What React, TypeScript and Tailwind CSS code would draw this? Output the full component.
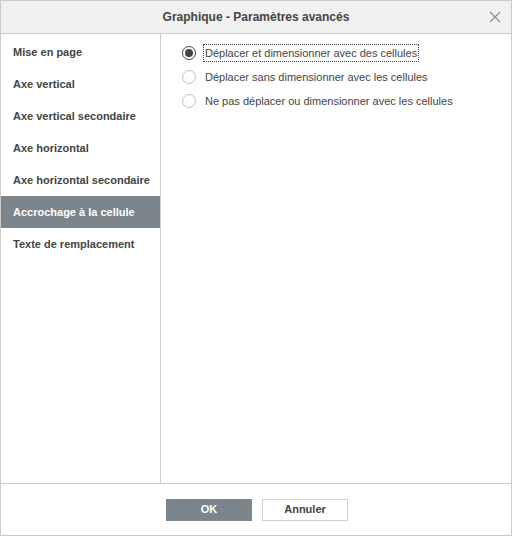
import React, { useState } from 'react';

const menu = [
  'Mise en page',
  'Axe vertical',
  'Axe vertical secondaire',
  'Axe horizontal',
  'Axe horizontal secondaire',
  'Accrochage à la cellule',
  'Texte de remplacement',
];

const options = [
  'Déplacer et dimensionner avec des cellules',
  'Déplacer sans dimensionner avec les cellules',
  'Ne pas déplacer ou dimensionner avec les cellules',
];

export default function App() {
  const [active] = useState(5);
  const [choice, setChoice] = useState(0);

  return (
    <div
      className="w-[512px] h-[536px] flex flex-col bg-white border border-[#cbcbcb] text-[#444] text-[11px]"
      style={{ fontFamily: 'Arial, "Liberation Sans", sans-serif' }}
    >
      <div className="h-[33px] shrink-0 flex items-center justify-center relative bg-[#f1f1f1] border-b border-[#cbcbcb]">
        <span className="text-[12px] font-bold text-[#444]">Graphique - Paramètres avancés</span>
        <svg className="absolute right-[10px] top-[10px]" width="12" height="12" viewBox="0 0 12 12">
          <path d="M1 1L11 11M11 1L1 11" stroke="#8a8a8a" strokeWidth="1.1" fill="none" />
        </svg>
      </div>

      <div className="flex flex-1 min-h-0 border-b border-[#cbcbcb]">
        <div className="w-[160px] shrink-0 border-r border-[#cbcbcb] pt-[2px]">
          {menu.map((m, i) => (
            <div
              key={m}
              className={
                'h-[32px] flex items-center pl-[12px] font-bold ' +
                (i === active ? 'bg-[#7d858c] text-white' : 'text-[#444]')
              }
            >
              {m}
            </div>
          ))}
        </div>
        <div className="flex-1 pt-[7px] pl-[21px]">
          {options.map((o, i) => (
            <label key={o} className="h-[24px] flex items-center cursor-pointer" onClick={() => setChoice(i)}>
              <span
                className="w-[14px] h-[14px] rounded-full border bg-white flex items-center justify-center shrink-0 mr-[9px]"
                style={{ borderColor: choice === i ? '#444' : '#c0c0c0' }}
              >
                {choice === i && <span className="w-[8px] h-[8px] rounded-full bg-[#444]" />}
              </span>
              <span className={choice === i ? 'outline outline-1 outline-dotted outline-[#444] px-[1px] -ml-[1px]' : ''}>{o}</span>
            </label>
          ))}
        </div>
      </div>

      <div className="h-[51px] shrink-0 flex items-center justify-center gap-[10px] pl-[2px]">
        <button className="w-[86px] h-[22px] bg-[#7d858c] text-white font-bold text-[11px]">OK</button>
        <button className="w-[86px] h-[22px] bg-white border border-[#cfcfcf] text-[#444] font-bold text-[11px]">Annuler</button>
      </div>
    </div>
  );
}
